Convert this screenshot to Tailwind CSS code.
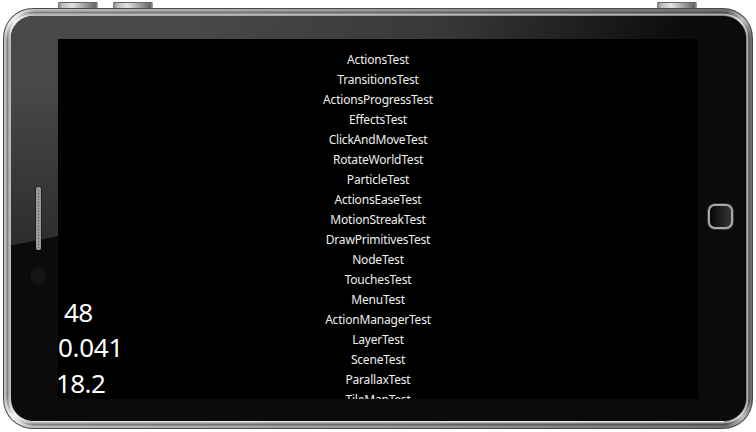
<!DOCTYPE html>
<html lang="en">
<head>
<meta charset="utf-8">
<title>Tests</title>
<script src="https://cdn.jsdelivr.net/npm/@tailwindcss/browser@4"></script>
</head>
<body class="bg-white">
<main class="relative w-[756px] h-[432px] overflow-hidden">
  <svg class="absolute inset-0" width="756" height="432" viewBox="0 0 756 432">
    <defs>
      <linearGradient id="btn"><stop offset="0" stop-color="#777"/><stop offset=".1" stop-color="#bbb"/><stop offset=".35" stop-color="#e4e4e4"/><stop offset=".7" stop-color="#999"/><stop offset=".93" stop-color="#666"/><stop offset="1" stop-color="#aaa"/></linearGradient>
      <linearGradient id="mid" gradientUnits="userSpaceOnUse" x1="0" y1="0" x2="756" y2="0"><stop offset="0" stop-color="#bdbdbd"/><stop offset=".5" stop-color="#999"/><stop offset="1" stop-color="#6c6c6c"/></linearGradient>
      <linearGradient id="dark" gradientUnits="userSpaceOnUse" x1="0" y1="0" x2="756" y2="0"><stop offset="0" stop-color="#808080"/><stop offset="1" stop-color="#505050"/></linearGradient>
      <linearGradient id="gloss" gradientUnits="userSpaceOnUse" x1="200" y1="0" x2="680" y2="70"><stop offset="0" stop-color="#484848"/><stop offset=".5" stop-color="#383838"/><stop offset="1" stop-color="#0b0b0b"/></linearGradient>
      <linearGradient id="fall" x1="0" y1="0" x2="0" y2="1"><stop offset="0" stop-color="#0b0b0b" stop-opacity="0"/><stop offset=".3" stop-color="#0b0b0b" stop-opacity="0"/><stop offset="1" stop-color="#0b0b0b" stop-opacity=".45"/></linearGradient>
      <linearGradient id="home"><stop offset="0" stop-color="#050505"/><stop offset="1" stop-color="#383838"/></linearGradient>
      <radialGradient id="shine"><stop offset="0" stop-color="#fff" stop-opacity=".9"/><stop offset="1" stop-color="#fff" stop-opacity="0"/></radialGradient>
      <clipPath id="frame"><rect x="4" y="9" width="748" height="419" rx="29"/></clipPath>
      <clipPath id="glass"><rect x="11" y="16" width="735" height="405" rx="22"/></clipPath>
    </defs>
    <g fill="url(#btn)"><rect x="58" y="2" width="40" height="8" rx="1"/><rect x="113" y="2" width="40" height="8" rx="1"/><rect x="657" y="2" width="40" height="8" rx="1"/></g>
    <path d="M59 2.5h38M114 2.5h38M658 2.5h38" stroke="#666"/>
    <rect x="3" y="8" width="750" height="421" rx="30" fill="#4a4a4a"/>
    <rect x="4" y="9" width="748" height="419" rx="29" fill="url(#mid)"/>
    <rect x="7.500" y="12.500" width="741" height="412" rx="26" fill="none" stroke="url(#dark)" stroke-width="2"/>
    <rect x="9.500" y="14.500" width="738" height="408" rx="24" fill="none" stroke="#b4b4b4" stroke-width="1.500"/>
    <path d="M32 421.500H724" stroke="#e8e8e8"/>
    <g clip-path="url(#frame)" fill="url(#shine)"><circle cx="15" cy="21" r="21"/><circle cx="15" cy="416" r="21"/><circle cx="741" cy="21" r="17" opacity=".7"/><circle cx="741" cy="416" r="17" opacity=".7"/></g>
    <g clip-path="url(#glass)">
      <rect x="10" y="15" width="738" height="408" fill="#0b0b0b"/>
      <path d="M10 15H700V100L58 236L10 245.500Z" fill="url(#gloss)"/>
      <path d="M10 15H58V236L10 245.500Z" fill="url(#fall)"/>
    </g>
    <rect x="35.500" y="186.500" width="6" height="64" rx="3" fill="#111"/>
    <rect x="36" y="187" width="5" height="63" rx="2" fill="#9999a0"/>
    <path d="M38.500 190V248" stroke="#555" stroke-dasharray="1 2"/>
    <circle cx="38.500" cy="276" r="8" fill="#151515"/>
    <rect x="707" y="203" width="27" height="27" rx="8" fill="#3a3a3a"/>
    <rect x="709" y="205" width="23" height="23" rx="6" fill="url(#home)" stroke="#aaa" stroke-width="2"/>
  </svg>
  <section class="absolute left-[58px] top-[39px] w-[640px] h-[360px] overflow-hidden bg-black text-[#eee] font-['Noto_Sans',sans-serif]">
    <ul class="flex flex-col items-center pt-[11px] text-[12px] leading-[20px] tracking-[-0.2px]">
      <li>ActionsTest</li><li>TransitionsTest</li><li>ActionsProgressTest</li><li>EffectsTest</li><li>ClickAndMoveTest</li><li>RotateWorldTest</li><li>ParticleTest</li><li>ActionsEaseTest</li><li>MotionStreakTest</li><li>DrawPrimitivesTest</li><li>NodeTest</li><li>TouchesTest</li><li>MenuTest</li><li>ActionManagerTest</li><li>LayerTest</li><li>SceneTest</li><li>ParallaxTest</li><li>TileMapTest</li>
    </ul>
    <div class="absolute left-0 bottom-[-2px] flex flex-col text-[26px] leading-[35.500px] text-white"><span class="pl-[6px] tracking-[-0.6px]">48</span><span class="tracking-[-0.3px]">0.041</span><span class="ml-[-2px] tracking-[-0.6px]">18.2</span></div>
  </section>
</main>
</body>
</html>
